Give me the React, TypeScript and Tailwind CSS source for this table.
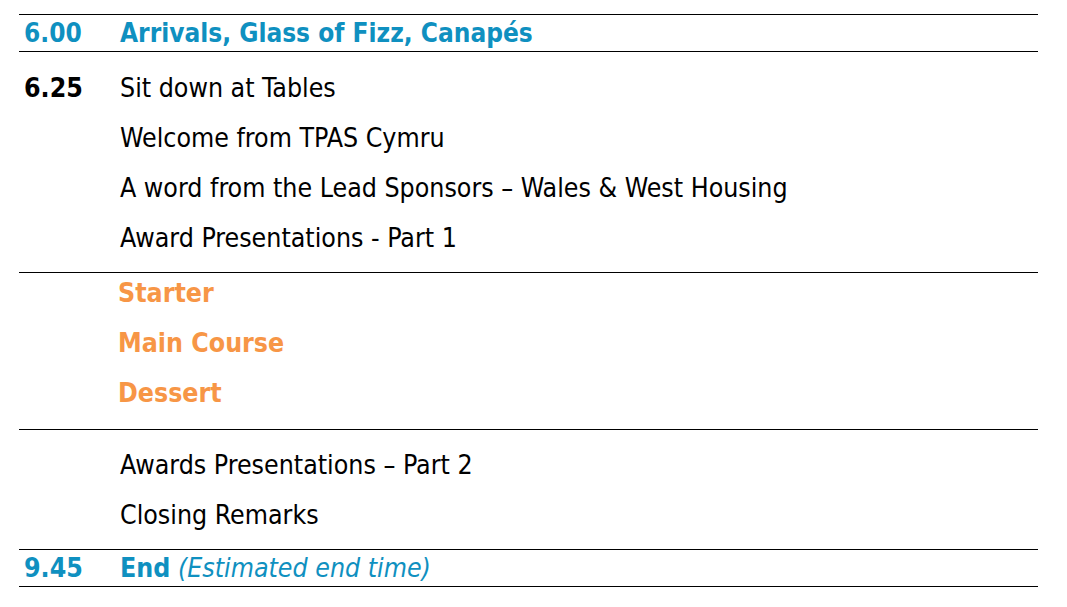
import React from "react";

const font = { fontFamily: '"DejaVu Sans Condensed", "DejaVu Sans", sans-serif' };

function Row({ time, children, textClass = "" }: { time?: string; children: React.ReactNode; textClass?: string }) {
  return (
    <div className="flex h-[36px] items-center pl-[5px]">
      <div className="w-[96px] shrink-0 font-bold">{time}</div>
      <div className={`whitespace-nowrap ${textClass}`}>{children}</div>
    </div>
  );
}

export default function App() {
  return (
    <div className="min-h-[607px] w-[1067px] bg-white pt-[14px]" style={font}>
      <div className="ml-[19px] w-[1019px] border-t border-black text-[26.5px] leading-none text-black">
        <div className="border-b border-black text-[26px] font-bold text-[#0f90c0]">
          <Row time="6.00">Arrivals, Glass of Fizz, Canapés</Row>
        </div>
        <div className="flex flex-col gap-[14px] border-b border-black pt-[18px] pb-[16px]">
          <Row time="6.25">Sit down at Tables</Row>
          <Row>Welcome from TPAS Cymru</Row>
          <Row>A word from the Lead Sponsors – Wales &amp; West Housing</Row>
          <Row>Award Presentations - Part 1</Row>
        </div>
        <div className="flex flex-col gap-[14px] border-b border-black pt-[2px] pb-[18px] font-bold text-[#f79646]">
          <Row textClass="-ml-[2px]">Starter</Row>
          <Row textClass="-ml-[2px]">Main Course</Row>
          <Row textClass="-ml-[2px]">Dessert</Row>
        </div>
        <div className="flex flex-col gap-[14px] border-b border-black pt-[17px] pb-[16px]">
          <Row>Awards Presentations – Part 2</Row>
          <Row>Closing Remarks</Row>
        </div>
        <div className="border-b border-black text-[26.5px] text-[#0f90c0]">
          <Row time="9.45">
            <span className="font-bold">End</span> <span className="italic">(Estimated end time)</span>
          </Row>
        </div>
      </div>
    </div>
  );
}
